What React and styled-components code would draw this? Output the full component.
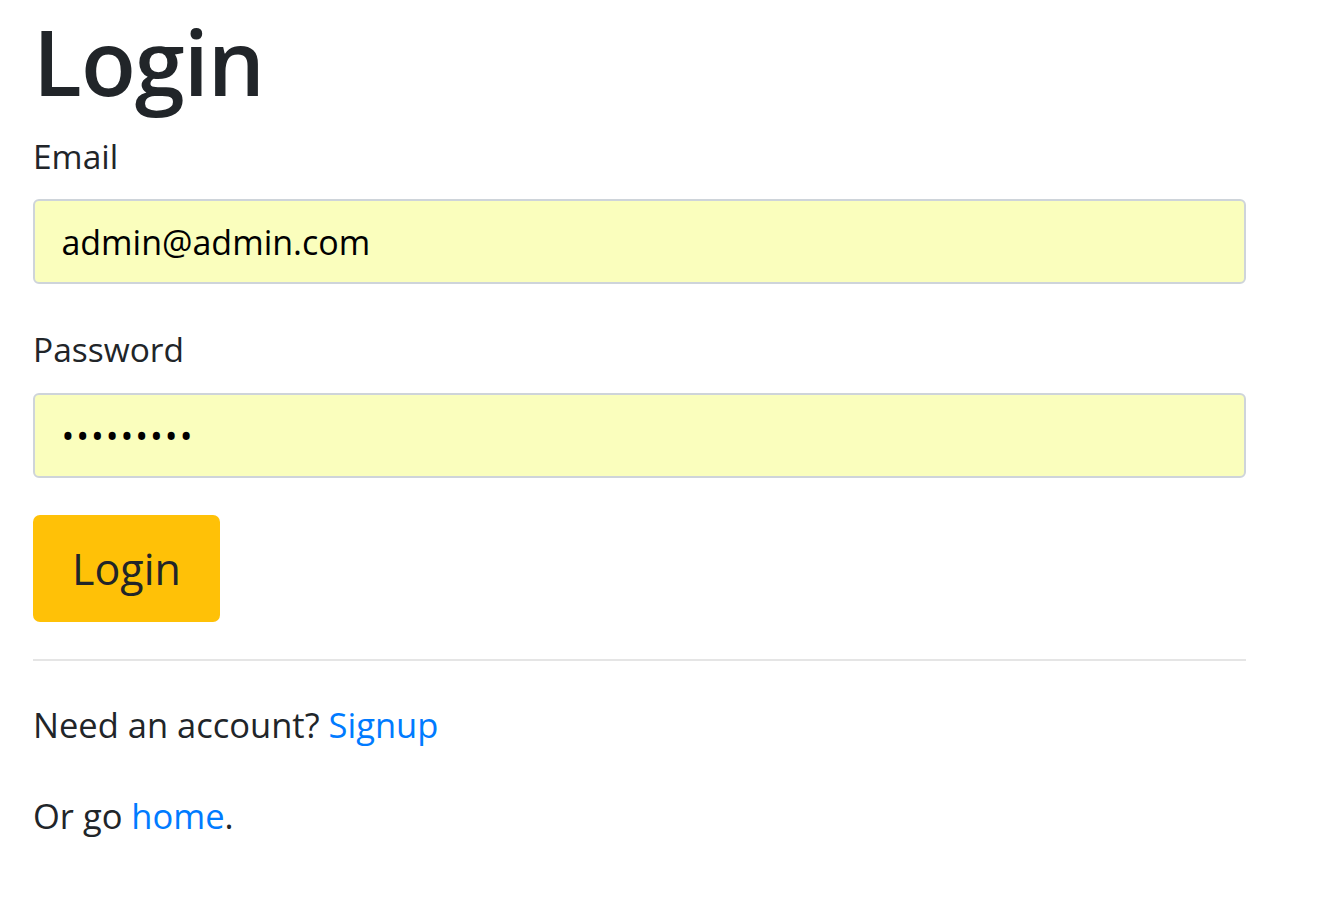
import React from "react";
import styled, { createGlobalStyle } from "styled-components";

const Global = createGlobalStyle`
  * { box-sizing: border-box; }
  html, body { margin: 0; padding: 0; background: #fff; }
  body {
    font-family: "Open Sans", "Noto Sans", "Liberation Sans", sans-serif;
    color: #212529;
    font-size: 35.2px;
    line-height: 1.5;
  }
`;

const Page = styled.main`
  padding: 7px 75px 0 33px;
  width: 1321px;
`;

const Title = styled.h1`
  margin: 0 0 14.6px;
  font-size: 90px;
  font-weight: 600;
  line-height: 1.2;
  letter-spacing: -1px;
`;

const Group = styled.div`
  display: flex;
  flex-direction: column;
  margin-bottom: ${(p) => p.$gap || 39}px;
`;

const Label = styled.label`
  font-size: 33.5px;
  line-height: 52.8px;
  margin-bottom: 17px;
`;

const Input = styled.input`
  height: 85px;
  width: 100%;
  padding: 0 26.4px;
  font-family: inherit;
  font-size: 34px;
  color: #000;
  background: #fafebd;
  border: 2px solid #ced4da;
  border-radius: 6px;
  outline: none;
  letter-spacing: ${(p) => (p.type === "password" ? "2px" : "0")};
`;

const Button = styled.button`
  display: block;
  height: 107px;
  padding: 0 39px;
  font-family: inherit;
  font-size: 43px;
  color: #212529;
  background: #ffc107;
  border: none;
  border-radius: 7px;
  cursor: pointer;
`;

const Rule = styled.hr`
  margin: 37px 0 38px;
  border: 0;
  border-top: 2px solid rgba(0, 0, 0, 0.1);
`;

const Para = styled.p`
  margin: 0 0 38px;
  font-size: 34.5px;
  line-height: 52.8px;
`;

const Link = styled.a`
  color: #007bff;
  text-decoration: none;
`;

export default function App() {
  return (
    <Page>
      <Global />
      <Title>Login</Title>
      <form onSubmit={(e) => e.preventDefault()}>
        <Group>
          <Label htmlFor="email">Email</Label>
          <Input id="email" type="email" defaultValue="admin@admin.com" />
        </Group>
        <Group $gap={37}>
          <Label htmlFor="password">Password</Label>
          <Input id="password" type="password" defaultValue="123456789" />
        </Group>
        <Button type="submit">Login</Button>
      </form>
      <Rule />
      <Para>
        Need an account? <Link href="#">Signup</Link>
      </Para>
      <Para>
        Or go <Link href="#">home</Link>.
      </Para>
    </Page>
  );
}
